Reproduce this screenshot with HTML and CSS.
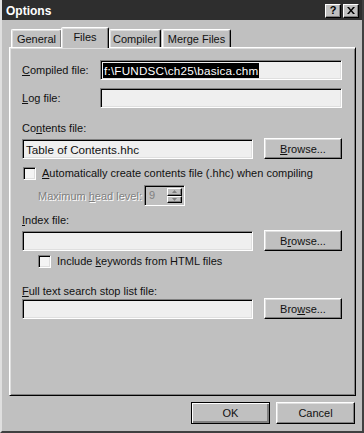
FILE: index.html
```html
<!DOCTYPE html>
<html>
<head>
<meta charset="utf-8">
<link rel="stylesheet" href="styles.css">
</head>
<body>
<div class="window">
  <div class="titlebar">
    <span class="title">Options</span>
    <div class="tb-buttons">
      <span class="tb-btn tb-help">?</span>
      <span class="tb-btn">
        <svg width="8" height="7" viewBox="0 0 8 7"><path d="M0 0L2 0L4 2.5L6 0L8 0L5 3.5L8 7L6 7L4 4.5L2 7L0 7L3 3.5Z" fill="#000"/></svg>
      </span>
    </div>
  </div>
  <div class="body">
    <div class="tabs">
      <div class="tab tab-general">General</div>
      <div class="tab tab-active">Files</div>
      <div class="tab tab-compiler">Compiler</div>
      <div class="tab tab-merge">Merge Files</div>
    </div>
    <div class="panel">
      <div class="row row-first">
        <label class="lbl lbl-side"><u>C</u>ompiled file:</label>
        <div class="field field-wide"><span class="sel">f:\FUNDSC\ch25\basica.chm</span></div>
      </div>
      <div class="row row-log">
        <label class="lbl lbl-side"><u>L</u>og file:</label>
        <div class="field field-wide"></div>
      </div>
      <div class="lbl lbl-contents">Co<u>n</u>tents file:</div>
      <div class="row row-browse">
        <div class="field field-mid">Table of Contents.hhc</div>
        <button class="btn btn-browse"><u>B</u>rowse...</button>
      </div>
      <div class="check-row check-auto">
        <span class="checkbox"></span>
        <span class="lbl"><u>A</u>utomatically create contents file (.hhc) when compiling</span>
      </div>
      <div class="row row-level">
        <span class="lbl disabled">Maximum <u>h</u>ead level:</span>
        <div class="spin">
          <span class="spin-val">9</span>
          <div class="spin-btns">
            <span class="spin-btn"><svg width="5" height="3" viewBox="0 0 5 3"><path d="M2.5 0L5 3H0Z" fill="#808080"/></svg></span>
            <span class="spin-btn"><svg width="5" height="3" viewBox="0 0 5 3"><path d="M0 0H5L2.5 3Z" fill="#808080"/></svg></span>
          </div>
        </div>
      </div>
      <div class="lbl lbl-index"><u>I</u>ndex file:</div>
      <div class="row row-browse">
        <div class="field field-mid"></div>
        <button class="btn btn-browse">B<u>r</u>owse...</button>
      </div>
      <div class="check-row check-include">
        <span class="checkbox"></span>
        <span class="lbl">Include <u>k</u>eywords from HTML files</span>
      </div>
      <div class="lbl lbl-full"><u>F</u>ull text search stop list file:</div>
      <div class="row row-browse row-last">
        <div class="field field-mid"></div>
        <button class="btn btn-browse">Bro<u>w</u>se...</button>
      </div>
    </div>
    <div class="footer">
      <button class="btn btn-default">OK</button>
      <button class="btn">Cancel</button>
    </div>
  </div>
</div>
</body>
</html>
```

FILE: styles.css
```css
* { box-sizing: border-box; }
html, body { margin: 0; padding: 0; background: #c0c0c0; }
body {
  font-family: "Liberation Sans", Arial, sans-serif;
  font-size: 11px;
  color: #111;
}
u { text-decoration: underline; text-underline-offset: 1px; }

.window {
  width: 364px;
  height: 433px;
  background: #c0c0c0;
  border-style: solid;
  border-width: 0 2px 2px 2px;
  border-color: #dfdfdf #404040 #404040 #dfdfdf;
  display: flex;
  flex-direction: column;
}

.titlebar {
  height: 20px;
  background: #2e2e2e;
  display: flex;
  align-items: center;
  justify-content: space-between;
  padding: 1px 3px 0 4px;
}
.title {
  color: #fff;
  font-weight: bold;
  font-size: 12px;
}
.tb-buttons { display: flex; gap: 2px; }
.tb-btn {
  width: 16px;
  height: 14px;
  background: #c0c0c0;
  border: 1px solid;
  border-color: #fff #000 #000 #fff;
  box-shadow: inset -1px -1px #808080;
  display: flex;
  align-items: center;
  justify-content: center;
  font-weight: bold;
  font-size: 11px;
  line-height: 1;
  color: #000;
}

.body {
  flex: 1;
  display: flex;
  flex-direction: column;
  padding: 0 6px 7px 7px;
}

.tabs {
  display: flex;
  align-items: flex-end;
  height: 20px;
  margin-top: 7px;
  padding-left: 2px;
  position: relative;
  z-index: 1;
}
.tab {
  height: 18px;
  border: 1px solid;
  border-bottom: none;
  border-color: #fff #000 transparent #fff;
  box-shadow: inset -1px 0 #808080, inset 1px 1px #dfdfdf;
  border-radius: 2px 2px 0 0;
  display: flex;
  align-items: center;
  justify-content: center;
  padding-top: 1px;
}
.tab-general { width: 51px; }
.tab-compiler { width: 52px; margin-left: 1px; }
.tab-merge { width: 69px; margin-left: 1px; }
.tab-active {
  width: 48px;
  height: 21px;
  margin: 0 -1px -1px -1px;
  background: #c0c0c0;
  padding-bottom: 4px;
}

.panel {
  height: 349px;
  border: 1px solid;
  border-color: #fff #000 #000 #fff;
  box-shadow: inset 1px 1px #dfdfdf, inset -1px -1px #808080;
  padding: 12px 12px 0 12px;
  display: flex;
  flex-direction: column;
}

.row { display: flex; align-items: center; }
.row-log { margin-top: 8px; }
.lbl { white-space: nowrap; line-height: 14px; }
.lbl-side { width: 78px; }

.field {
  height: 20px;
  background: #efefef;
  border: 1px solid;
  border-color: #808080 #fff #fff #808080;
  box-shadow: inset 1px 1px #000, inset -1px -1px #dfdfdf;
  padding: 2px 3px 0 3px;
  white-space: nowrap;
  overflow: hidden;
  line-height: 15px;
  font-size: 11.7px;
}
.field-wide { width: 242px; }
.field-mid { width: 231px; }
.sel { background: #000; color: #fff; display: inline-block; padding: 0 1px; margin-left: -1px; letter-spacing: 0.2px; }

.lbl-contents { margin-top: 13px; }
.row-browse { margin-top: 3px; justify-content: space-between; width: 320px; }

.btn {
  font-family: inherit;
  font-size: 11px;
  color: #111;
  background: #c0c0c0;
  border: 1px solid;
  border-color: #fff #000 #000 #fff;
  box-shadow: inset -1px -1px #808080, inset 1px 1px #dfdfdf;
  padding: 0;
  height: 22px;
  width: 79px;
}
.btn-browse { width: 78px; height: 21px; }

.check-row { display: flex; align-items: center; gap: 6px; }
.check-auto { margin-top: 7px; padding-left: 1px; }
.checkbox {
  width: 13px;
  height: 13px;
  background: #f4f4f4;
  border: 1px solid;
  border-color: #808080 #fff #fff #808080;
  box-shadow: inset 1px 1px #000, inset -1px -1px #dfdfdf;
}

.row-level { margin-top: 5px; padding-left: 16px; gap: 2px; }
.disabled { color: #808080; text-shadow: 1px 1px #fff; }
.spin {
  width: 41px;
  height: 21px;
  display: flex;
  background: #c0c0c0;
  border: 1px solid;
  border-color: #808080 #fff #fff #808080;
  box-shadow: inset 1px 1px #000;
  padding: 2px 2px 2px 4px;
}
.spin-val { flex: 1; color: #808080; line-height: 15px; }
.spin-btns { display: flex; flex-direction: column; width: 15px; }
.spin-btn {
  flex: 1;
  border: 1px solid;
  border-color: #fff #000 #000 #fff;
  box-shadow: inset -1px -1px #808080;
  display: flex;
  align-items: center;
  justify-content: center;
}

.lbl-index { margin-top: 7px; }
.check-include { margin-top: 3px; padding-left: 16px; }
.lbl-full { margin-top: 16px; }
.row-last { margin-top: 0; }

.footer {
  display: flex;
  justify-content: flex-end;
  gap: 6px;
  margin-top: 6px;
  padding-right: 1px;
}
.btn-default {
  border-color: #000;
  box-shadow: inset 1px 1px #fff, inset -1px -1px #808080, inset -2px -2px #808080;
}
```
